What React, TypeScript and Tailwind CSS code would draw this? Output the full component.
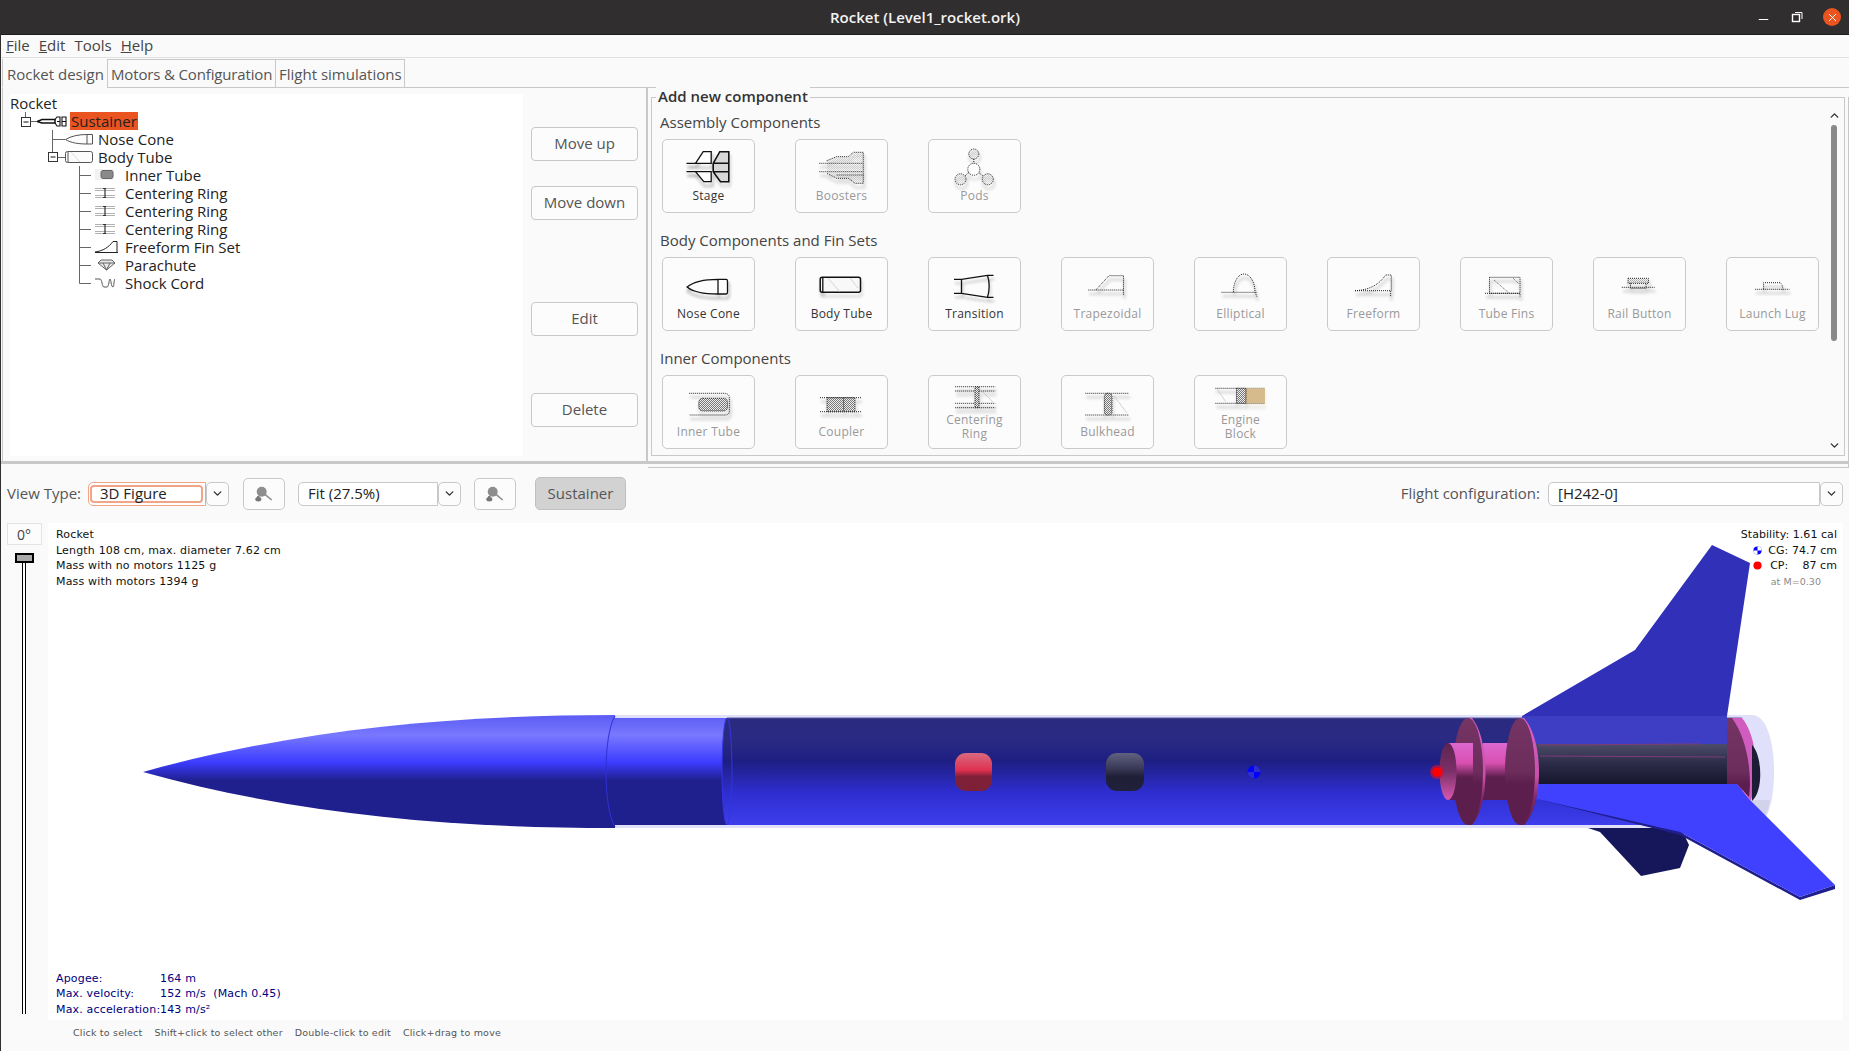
import { ChevronDown, ChevronUp, Minus, X } from "lucide-react";
import type { ReactNode } from "react";

const treeRows = [
  { label: "Rocket", pad: "pl-0" },
  { label: "Sustainer", pad: "pl-[27px]", icon: "sustainer", selected: true },
  { label: "Nose Cone", pad: "pl-[55px]", icon: "nose" },
  { label: "Body Tube", pad: "pl-[55px]", icon: "body" },
  { label: "Inner Tube", pad: "pl-[85px]", icon: "inner" },
  { label: "Centering Ring", pad: "pl-[85px]", icon: "ring" },
  { label: "Centering Ring", pad: "pl-[85px]", icon: "ring" },
  { label: "Centering Ring", pad: "pl-[85px]", icon: "ring" },
  { label: "Freeform Fin Set", pad: "pl-[85px]", icon: "fin" },
  { label: "Parachute", pad: "pl-[85px]", icon: "chute" },
  { label: "Shock Cord", pad: "pl-[85px]", icon: "cord" },
];

function TreeIcon({ name }: { name?: string }) {
  if (name === "sustainer") {
    return (
      <svg width="30" height="18" viewBox="0 0 30 18" className="mr-[3px]" fill="none" stroke="#111">
        <path d="M0 9.5 L5 7.5 H18 V11 H5 Z" fill="#fff" strokeWidth="1.5" />
        <path d="M18 7.5 L20 5 H23 V14 H20 L18 11 M25 5 H29 V14 H25 Z M25 9.5 H29 M20 9.5 H23" strokeWidth="1.1" />
      </svg>
    );
  }
  if (name === "nose") {
    return (
      <svg width="28" height="18" viewBox="0 0 28 18" className="mr-[5px]" fill="none" stroke="#555">
        <path d="M0.5 9.5 C6 6 14 4.5 22 4.5 H27.5 V14 H22 C14 14 6 13 0.5 9.5 Z M22 4.5 V14" fill="#fcfcfc" />
      </svg>
    );
  }
  if (name === "body") {
    return (
      <svg width="28" height="18" viewBox="0 0 28 18" className="mr-[5px]" fill="none" stroke="#555">
        <rect x="0.5" y="3.5" width="27" height="11" rx="2" fill="#fcfcfc" />
        <path d="M3 4 V14" />
        <path d="M6 4 L15 14" stroke="#ddd" />
      </svg>
    );
  }
  return (
    <svg width="24" height="18" viewBox="0 0 24 18" className="mr-[6px]" fill="none" stroke="#555">
      {name === "inner" && (
        <g>
          <rect x="0" y="3" width="19" height="11" fill="#f2f2f2" stroke="none" />
          <rect x="6" y="4.5" width="12" height="8" rx="2" fill="#8a8a8a" stroke="#666" />
        </g>
      )}
      {name === "ring" && (
        <g>
          <path d="M0 4.5 H20 M0 6.5 H20 M0 11.5 H20 M0 13.5 H20" stroke="#aaa" strokeWidth="0.9" />
          <path d="M10 4 V14 M8 4.5 H11 M8 13.5 H11" stroke="#333" strokeWidth="1.2" />
        </g>
      )}
      {name === "fin" && <path d="M0 14.5 H23 M0 14 C8 13 14 9 18 3.5 H22 V14.5" stroke="#222" strokeWidth="1" />}
      {name === "chute" && (
        <path d="M3 7 L6 4 H17 L20 7 L11.5 14 Z M3 7 H20 M8 7 L11.5 14 M15 7 L11.5 14" strokeWidth="0.9" fill="#e8e8e8" />
      )}
      {name === "cord" && <path d="M0 5 H5 C7 5 7 13 9 13 H12 C14 13 14 5 15 5 C16 5 16 13 18 13 C19 13 19 5 20 5" strokeWidth="1" />}
    </svg>
  );
}

function Tree() {
  return (
    <div className="relative ml-[7px] mt-[6px] mb-[5px] w-[513px] h-[362px] bg-white text-[15px] leading-[18px] text-[#222]">
      {/* connector lines of the tree */}
      <svg className="absolute left-0 top-0" width="120" height="200" fill="none" stroke="#666">
        <path d="M15.5 18 V23 M20 27.5 H27 M42.5 36 V58 M42.5 45.5 H55 M48 63.5 H55 M69.5 72 V189.5 M69.5 81.5 H81 M69.5 99.5 H81 M69.5 117.5 H81 M69.5 135.5 H81 M69.5 153.5 H81 M69.5 171.5 H81 M69.5 189.5 H81" />
        <rect x="11.5" y="23.5" width="9" height="9" fill="#fff" stroke="#333" />
        <path d="M13.5 28 H18.5" stroke="#111" />
        <rect x="38.5" y="58.5" width="9" height="9" fill="#fff" stroke="#333" />
        <path d="M40.5 63 H45.5" stroke="#111" />
      </svg>
      {treeRows.map((row, i) => (
        <div key={i} className={`relative flex items-center h-[18px] ${row.pad}`}>
          {row.icon && <TreeIcon name={row.icon} />}
          <span className={row.selected ? "bg-[#e95420] px-[1px]" : ""}>{row.label}</span>
        </div>
      ))}
    </div>
  );
}

function SideButton({ label, className }: { label: string; className: string }) {
  return (
    <button className={`h-[34px] w-[107px] rounded-[4px] border border-[#c8c8c8] bg-[#fcfcfc] pb-[2px] text-[15px] text-[#555] ${className}`}>
      {label}
    </button>
  );
}

// outline drawn twice: once blurred as a drop shadow, once sharp
function CardIcon({ children, off }: { children: ReactNode; off?: boolean }) {
  return (
    <svg width="48" height="36" viewBox="0 0 48 36" fill="none" className="mb-[3px] shrink-0 overflow-visible">
      <defs>
        <filter id="soft" x="-20%" y="-20%" width="140%" height="160%">
          <feGaussianBlur stdDeviation="1.8" />
        </filter>
        <pattern id="dither" width="2" height="2" patternUnits="userSpaceOnUse">
          <rect width="2" height="2" fill="#eee" />
          <rect width="1" height="1" fill="#777" />
          <rect x="1" y="1" width="1" height="1" fill="#777" />
        </pattern>
      </defs>
      <g transform="translate(1 4)" stroke="#000" strokeWidth="2.5" opacity={off ? 0.14 : 0.3} filter="url(#soft)">
        {children}
      </g>
      <g stroke={off ? "#222" : "#111"} strokeWidth={off ? 1 : 1.3} strokeDasharray={off ? "1 1" : undefined}>
        {children}
      </g>
    </svg>
  );
}

const icons: Record<string, ReactNode> = {
  Stage: (
    <g>
      <path d="M1.5 13.3 H10.5 M1.5 21.7 H10.5" />
      <path d="M10.5 13.3 L18.2 1.7 H26.2 V13.3 Z M10.5 21.7 H26.2 V31.7 H18.8 Z" fill="#fff" />
      <path d="M28.2 13.3 L34.8 1.7 H43.8 V31.7 H35.5 L28.2 21.7 Z M28.2 13.3 H43.8 M28.2 21.7 H43.8" fill="#d8d8d8" strokeWidth="1.6" />
    </g>
  ),
  Boosters: (
    <path
      d="M8.7 10.7 L18.7 6.7 H30.3 L35.3 2.3 H45.3 V33.3 H37 L30.3 28.3 H18.7 L8.7 23.3 M1.3 13.3 H45.3 M1.3 21.7 H45.3 M18.7 25 H45.3"
      fill="url(#dither)"
      fillOpacity="0.25"
    />
  ),
  Pods: (
    <g>
      <circle cx="22.8" cy="4" r="5" fill="url(#dither)" fillOpacity="0.25" />
      <circle cx="22.8" cy="19.3" r="6" fill="#fff" />
      <circle cx="9.5" cy="29.3" r="5.5" fill="url(#dither)" fillOpacity="0.25" />
      <circle cx="36.8" cy="29.3" r="5.5" fill="url(#dither)" fillOpacity="0.25" />
      <path d="M22.8 9 V13.3 M17.8 22.5 L14 26 M27.8 22.5 L32 26" />
    </g>
  ),
  "Nose Cone": <path d="M2.1 19 C8 14 20 11.3 33 11.3 H41 Q42.5 11.3 42.5 13 V24 Q42.5 26 41 26 H33 C20 26 8 24 2.1 19 Z M33 11.3 V26" fill="#fcfcfc" />,
  "Body Tube": (
    <g>
      <rect x="2.2" y="9.3" width="40.3" height="15" rx="2" fill="#f8f8f8" strokeWidth="1.5" />
      <path d="M4.8 9.3 V24.3" />
      <path d="M10 10 L22 24 M32 10 L40 20" stroke="#bbb" strokeWidth="0.6" />
    </g>
  ),
  Transition: <path d="M3 11.3 H10.5 L36.5 7.3 H42.5 M3 25.3 H10.5 L36.5 29.3 H42.5 M10.5 11.3 V25.3 M36.5 7.3 C38.5 14 38.5 23 36.5 29.3" fill="#fff" strokeWidth="1.3" />,
  Trapezoidal: <path d="M4.3 22 H39.5 M11.8 22 L24.9 7.7 H39.5 V27" />,
  Elliptical: <path d="M4.5 24.3 H40 M16.4 24.3 C16.4 14 21 6 27 6 C33 6 38 14 38 24.3 L40 28.7" />,
  Freeform: <path d="M5 22.7 H40.6 V28.7 M5 22.7 C18 22 28 18 35.6 7 H41.3 V22.7" />,
  "Tube Fins": (
    <g>
      <rect x="6.5" y="9.3" width="30.5" height="16" />
      <path d="M2 25.3 H37 V28.7" />
      <path d="M11 12 L26 25 M30 10 L36 16" strokeWidth="0.7" />
    </g>
  ),
  "Rail Button": (
    <g>
      <rect x="12" y="10.3" width="20.5" height="5" fill="url(#dither)" fillOpacity="0.5" />
      <path d="M5.8 19.3 H38.6 M14.5 15.3 V20.3 H30 V15.3" />
    </g>
  ),
  "Launch Lug": <path d="M6.2 21.3 H40.6 M14.6 21.3 V14.7 H31 Q33.7 16 33.7 21.3" />,
  "Inner Tube": (
    <g>
      <path d="M4.2 7.3 H40 Q44.4 8 44.4 12 V25 Q44.4 29 40 29 H4.2" />
      <rect x="13.8" y="12.3" width="28.7" height="12.7" rx="4" fill="url(#dither)" />
    </g>
  ),
  Coupler: (
    <g>
      <path d="M2 11.7 H43 M2 25.7 H43" />
      <rect x="9" y="11.7" width="28" height="14" fill="url(#dither)" />
      <path d="M25.7 11.7 V25.7" />
    </g>
  ),
  "Centering Ring": (
    <g>
      <path d="M4.2 12.7 H44.4 M4.2 17 H44.4 M4.2 29.3 H44.4 M4.2 33.7 H44.4" />
      <rect x="24" y="12.7" width="4" height="21" fill="url(#dither)" />
      <path d="M30 16 L42 28" stroke="#aaa" strokeDasharray="none" strokeWidth="0.5" />
    </g>
  ),
  Bulkhead: (
    <g>
      <path d="M1.3 7.3 H45.3 M1.3 29 H45.3" />
      <rect x="20.4" y="7.3" width="7.6" height="21.7" rx="3" fill="url(#dither)" />
      <path d="M30 10 L43 27" stroke="#aaa" strokeDasharray="none" strokeWidth="0.5" />
    </g>
  ),
  "Engine Block": (
    <g>
      <path d="M-1.6 14.3 H48 M-1.6 29.3 H48" />
      <path d="M0 15 L9 28" stroke="#aaa" strokeDasharray="none" strokeWidth="0.5" />
      <rect x="29" y="14.3" width="19" height="15" fill="#d6bc8c" stroke="none" />
      <rect x="19.5" y="14.3" width="9.5" height="15" fill="url(#dither)" />
    </g>
  ),
};

const sections = [
  {
    title: "Assembly Components",
    cards: [
      { label: ["Stage"] },
      { label: ["Boosters"], off: true },
      { label: ["Pods"], off: true },
    ],
  },
  {
    title: "Body Components and Fin Sets",
    cards: [
      { label: ["Nose Cone"] },
      { label: ["Body Tube"] },
      { label: ["Transition"] },
      { label: ["Trapezoidal"], off: true },
      { label: ["Elliptical"], off: true },
      { label: ["Freeform"], off: true },
      { label: ["Tube Fins"], off: true },
      { label: ["Rail Button"], off: true },
      { label: ["Launch Lug"], off: true },
    ],
  },
  {
    title: "Inner Components",
    cards: [
      { label: ["Inner Tube"], off: true },
      { label: ["Coupler"], off: true },
      { label: ["Centering", "Ring"], off: true },
      { label: ["Bulkhead"], off: true },
      { label: ["Engine", "Block"], off: true },
    ],
  },
];

function ComponentCard({ label, off }: { label: string[]; off?: boolean }) {
  const two = label.length > 1;
  return (
    <div
      className={`flex h-[74px] w-[93px] flex-col items-center justify-end rounded-[5px] border border-[#cacaca] bg-[#fcfcfc] text-center text-[12px] leading-[14px] tracking-[0.25px] ${
        two ? "pb-[7px]" : "pb-[9px]"
      } ${off ? "text-[#999]" : "text-[#333]"}`}
    >
      <CardIcon off={off}>{icons[label.join(" ")]}</CardIcon>
      {label.map((l) => (
        <span key={l}>{l}</span>
      ))}
    </div>
  );
}

function AddComponentPanel() {
  return (
    <div className="relative ml-[3px] mt-[9px] flex h-[359px] w-[1194px] border border-[#c8c8c8]">
      <span className="absolute left-[4px] top-[-12px] bg-[#fafafa] px-[2px] text-[15px] leading-[20px] font-semibold text-[#333]">
        Add new component
      </span>
      <div className="flex-1 pl-[8px] pt-[15px]">
        {sections.map((s) => (
          <div key={s.title} className="mb-[18px]">
            <div className="mb-[6px] h-[20px] text-[15px] leading-[18px] text-[#444]">{s.title}</div>
            <div className="ml-[2px] flex gap-x-[40px]">
              {s.cards.map((c) => (
                <ComponentCard key={c.label.join(" ")} label={c.label} off={c.off} />
              ))}
            </div>
          </div>
        ))}
      </div>
      <div className="mr-[2px] flex w-[16px] flex-col items-center pt-[11px]">
        <ChevronUp size={13} strokeWidth={2.6} className="text-[#333]" />
        <div className="mt-[3px] h-[216px] w-[6px] rounded-[3px] bg-[#888]" />
        <ChevronDown size={13} strokeWidth={2.6} className="mt-auto mb-[3px] text-[#333]" />
      </div>
    </div>
  );
}

function ZoomIcon() {
  return (
    <svg width="18" height="20" viewBox="0 0 18 20" fill="#8e8e8e">
      <path d="M10 10.3 L16.7 16" stroke="#8e8e8e" strokeWidth="1.6" />
      <path d="M3.3 12 V15" stroke="#777" strokeWidth="2.4" />
      <ellipse cx="3.3" cy="15.3" rx="3" ry="2.2" fill="#777" />
      <circle cx="6.7" cy="7.7" r="5" />
    </svg>
  );
}

function Combo({ text, box, focus }: { text: string; box: string; focus?: boolean }) {
  return (
    <div className="flex items-center">
      <div
        className={`flex h-[24px] items-center rounded-l-[5px] bg-white text-[15px] text-[#222] ${box} ${
          focus ? "border border-[#f0a488] pl-[1px] pr-[2px]" : "border border-[#c8c8c8] pl-[9px]"
        }`}
      >
        {focus ? (
          <span className="flex h-[18px] w-full items-center rounded-[4px] border-2 border-[#f0a488] pl-[8px]">{text}</span>
        ) : (
          text
        )}
      </div>
      <div className="flex h-[24px] w-[23px] items-center justify-center rounded-[5px] border border-[#c8c8c8] bg-[#fcfcfc]">
        <ChevronDown size={13} strokeWidth={2.6} className="text-[#333]" />
      </div>
    </div>
  );
}

function IconButton() {
  return (
    <div className="flex h-[32px] w-[42px] items-center justify-center rounded-[5px] border border-[#c8c8c8] bg-[#fcfcfc]">
      <ZoomIcon />
    </div>
  );
}

function Toolbar() {
  return (
    <div className="flex h-[59px] shrink-0 items-center pl-[6px] pr-[6px] text-[15px] text-[#555]">
      <span className="w-[81px]">View Type:</span>
      <Combo text="3D Figure" box="w-[118px]" focus />
      <div className="ml-[14px]">
        <IconButton />
      </div>
      <div className="ml-[13px]">
        <Combo text="Fit (27.5%)" box="w-[140px]" />
      </div>
      <div className="ml-[13px]">
        <IconButton />
      </div>
      <div className="ml-[19px] flex h-[33px] w-[91px] items-center justify-center rounded-[5px] border border-[#c0c0c0] bg-[#d2d2d2] text-[#555]">
        Sustainer
      </div>
      <span className="ml-auto mr-[8px]">Flight configuration:</span>
      <Combo text="[H242-0]" box="w-[272px]" />
    </div>
  );
}

// the 3D view, drawn in page coordinates
function RocketDrawing() {
  return (
    <svg className="absolute inset-0" width="1795" height="497" viewBox="48 523 1795 497">
      <defs>
        <linearGradient id="noseFill" gradientUnits="userSpaceOnUse" x1="0" y1="715" x2="0" y2="828">
          <stop offset="0" stopColor="#5c5cf4" />
          <stop offset="0.18" stopColor="#7878ff" />
          <stop offset="0.42" stopColor="#3c3cff" />
          <stop offset="0.58" stopColor="#1f1f8e" />
          <stop offset="1" stopColor="#1f1f8e" />
        </linearGradient>
        <linearGradient id="tubeFill" gradientUnits="userSpaceOnUse" x1="0" y1="718" x2="0" y2="825">
          <stop offset="0" stopColor="#2a2a80" />
          <stop offset="0.2" stopColor="#2a2a84" />
          <stop offset="0.4" stopColor="#1e1e82" />
          <stop offset="0.7" stopColor="#2e2ed0" />
          <stop offset="1" stopColor="#3e3eec" />
        </linearGradient>
        <linearGradient id="redFill" gradientUnits="userSpaceOnUse" x1="0" y1="753" x2="0" y2="791">
          <stop offset="0" stopColor="#d86a80" />
          <stop offset="0.45" stopColor="#e03050" />
          <stop offset="0.62" stopColor="#802038" />
          <stop offset="1" stopColor="#7c2038" />
        </linearGradient>
        <linearGradient id="darkFill" gradientUnits="userSpaceOnUse" x1="0" y1="753" x2="0" y2="791">
          <stop offset="0" stopColor="#606080" />
          <stop offset="0.4" stopColor="#3a3a58" />
          <stop offset="0.62" stopColor="#1f1f38" />
          <stop offset="1" stopColor="#20203a" />
        </linearGradient>
        <linearGradient id="pinkFill" gradientUnits="userSpaceOnUse" x1="0" y1="743" x2="0" y2="800">
          <stop offset="0" stopColor="#dc68d0" />
          <stop offset="0.35" stopColor="#d850b0" />
          <stop offset="0.6" stopColor="#5c1e4c" />
          <stop offset="1" stopColor="#5c1e4c" />
        </linearGradient>
        <linearGradient id="ringFace" gradientUnits="userSpaceOnUse" x1="0" y1="718" x2="0" y2="825">
          <stop offset="0" stopColor="#743464" />
          <stop offset="0.5" stopColor="#6c2c5c" />
          <stop offset="0.62" stopColor="#5c1e4c" />
          <stop offset="1" stopColor="#5c1e4c" />
        </linearGradient>
        <linearGradient id="rimFill" gradientUnits="userSpaceOnUse" x1="0" y1="718" x2="0" y2="825">
          <stop offset="0" stopColor="#d860c8" />
          <stop offset="0.55" stopColor="#c850a8" />
          <stop offset="0.75" stopColor="#7c2868" />
          <stop offset="1" stopColor="#5c1e4c" />
        </linearGradient>
        <linearGradient id="holeFill" gradientUnits="userSpaceOnUse" x1="0" y1="743" x2="0" y2="800">
          <stop offset="0" stopColor="#5c2450" />
          <stop offset="0.5" stopColor="#7c3068" />
          <stop offset="1" stopColor="#d858b0" />
        </linearGradient>
        <linearGradient id="innerFill" gradientUnits="userSpaceOnUse" x1="0" y1="743" x2="0" y2="784">
          <stop offset="0" stopColor="#4e4e6c" />
          <stop offset="0.5" stopColor="#2c2c48" />
          <stop offset="1" stopColor="#16162e" />
        </linearGradient>
      </defs>

      {/* far fin behind the tube */}
      <path d="M1582 826 L1600 832 L1641 876 L1680 868 L1689 845 L1680 826 Z" fill="#16165a" />

      {/* clear outer tube */}
      <path d="M610 715 H1752 C1766 715 1774 740 1774 772 C1774 804 1766 828 1752 828 H610 Z" fill="#e0e0fa" />
      <path d="M1750 800 L1770 800 C1768 814 1760 828 1752 828 L1700 828 Z" fill="#d2d2ea" />

      {/* tube inside */}
      <path d="M722 718 H1742 V825 H722 Z" fill="url(#tubeFill)" />
      <path d="M727 718 H1742" stroke="#5a5a98" strokeWidth="1" />
      <rect x="610" y="718" width="117" height="107" fill="url(#noseFill)" />
      <ellipse cx="727" cy="771.5" rx="5" ry="53.5" fill="url(#tubeFill)" stroke="#3434e0" strokeWidth="1" />

      {/* nose cone */}
      <path d="M143 772 C300 728 460 715 615 715 V828 C460 828 300 816 143 772 Z" fill="url(#noseFill)" />
      <path d="M615 716 C603 735 603 808 615 827" fill="none" stroke="#3030d8" strokeWidth="1" />

      {/* motor and parachute capsules */}
      <rect x="955" y="753" width="37" height="38" rx="11" fill="url(#redFill)" />
      <rect x="1106" y="753" width="38" height="38" rx="11" fill="url(#darkFill)" />

      {/* top fin */}
      <path d="M1522 716 L1635 650 L1712 545 L1750 563 L1727 716 Z" fill="#3030b8" />
      <rect x="1522" y="716" width="205" height="30" fill="#3e3ec4" />
      <rect x="1490" y="746" width="237" height="40" fill="url(#tubeFill)" />

      {/* inner tube */}
      <rect x="1530" y="744" width="208" height="40" fill="url(#innerFill)" />
      <path d="M1538 745 L1700 744 M1540 756 L1725 757" stroke="#7c3c78" strokeWidth="1" fill="none" />

      {/* lower blue band and near fin */}
      <rect x="1530" y="784" width="208" height="16" fill="#3c3ce8" />
      <path d="M1537 799 L1680 835 L1800 900 L1835 889 V885 L1800 897 L1680 832 L1537 796 Z" fill="#1e1e8c" />
      <path d="M1537 799 V784 H1737 L1750 800 L1835 885 L1800 897 L1680 832 Z" fill="#4040ff" />

      {/* rear centering ring */}
      <path d="M1727 718 H1742 C1752 730 1762 760 1751 801 L1737 784 H1727 Z" fill="#d05cc0" />
      <path d="M1727 718 H1732 C1748 740 1752 775 1749 797 L1737 784 H1727 Z" fill="url(#ringFace)" />
      <path d="M1752 745 C1762 755 1764 790 1752 801 Z" fill="#1c1c34" />

      {/* forward rings and coupling */}
      <rect x="1483" y="743" width="46" height="57" fill="url(#pinkFill)" />
      <path d="M1468 718 H1472 C1490 740 1490 805 1472 825 H1468 Z" fill="url(#rimFill)" />
      <ellipse cx="1468" cy="771.5" rx="15" ry="53.5" fill="url(#ringFace)" />
      <path d="M1520 718 H1524 C1544 740 1544 805 1524 825 H1520 Z" fill="url(#rimFill)" />
      <ellipse cx="1520" cy="771.5" rx="15" ry="53.5" fill="url(#ringFace)" />
      <rect x="1448" y="743" width="25" height="57" fill="url(#pinkFill)" />
      <ellipse cx="1448" cy="771.5" rx="8.5" ry="28.5" fill="url(#holeFill)" />

      {/* CG and CP marks */}
      <circle cx="1254" cy="772" r="6.5" fill="#0000ff" />
      <path d="M1254 772 V765.5 A6.5 6.5 0 0 1 1260.5 772 Z M1254 772 V778.5 A6.5 6.5 0 0 1 1247.5 772 Z" fill="#2e2ec8" />
      <circle cx="1437" cy="772" r="7" fill="#d01030" fillOpacity="0.7" />
      <circle cx="1437" cy="772" r="4.6" fill="#ff0000" />
    </svg>
  );
}

function RocketView() {
  const mono = "font-['DejaVu_Sans',sans-serif] text-[11px] leading-[15.5px]";
  return (
    <div className="relative mr-[6px] flex-1 bg-white">
      <RocketDrawing />
      <div className={`absolute left-[8px] top-[4px] tracking-[0.17px] text-[#111] ${mono}`}>
        <div>Rocket</div>
        <div>Length 108 cm, max. diameter 7.62 cm</div>
        <div>Mass with no motors 1125 g</div>
        <div>Mass with motors 1394 g</div>
      </div>
      <div className={`absolute right-[6px] top-[4px] text-right tracking-[0.05px] text-[#111] ${mono}`}>
        <div>Stability: 1.61 cal</div>
        <div className="flex items-center justify-end gap-[6px]">
          <svg width="9" height="9" viewBox="0 0 11 11">
            <circle cx="5.5" cy="5.5" r="5" fill="#0000ff" />
            <path d="M5.5 5.5 V0.5 A5 5 0 0 1 10.5 5.5 Z M5.5 5.5 V10.5 A5 5 0 0 1 0.5 5.5 Z" fill="#fff" />
          </svg>
          <span>CG: 74.7 cm</span>
        </div>
        <div className="flex items-center justify-end gap-[8px]">
          <svg width="9" height="9" viewBox="0 0 11 11">
            <circle cx="5.5" cy="5.5" r="5" fill="#ff0000" />
          </svg>
          <span className="whitespace-pre">CP:    87 cm</span>
        </div>
        <div className="pr-[16px] text-[9.5px] text-[#8a8a8a]">at M=0.30</div>
      </div>
      <div className={`absolute bottom-[3px] left-[8px] grid grid-cols-[104px_auto] tracking-[0.17px] text-[#000080] ${mono}`}>
        <span>Apogee:</span>
        <span>164 m</span>
        <span>Max. velocity:</span>
        <span className="whitespace-pre">152 m/s  (Mach 0.45)</span>
        <span className="whitespace-nowrap">Max. acceleration:</span>
        <span>143 m/s²</span>
      </div>
    </div>
  );
}

function RotationSlider() {
  return (
    <div className="flex w-[47px] shrink-0 flex-col items-center pr-[7px] pl-[6px]">
      <div className="flex h-[22px] w-[35px] items-center justify-center border border-[#e4e4e4] bg-[#fcfcfc] text-[14px] text-[#444]">
        0°
      </div>
      <div className="mt-[8px] h-[10px] w-[19px] border-2 border-black bg-[#aaa]" />
      <div className="h-[451px] w-[4px] border-x border-black bg-white" />
    </div>
  );
}

export default function App() {
  return (
    <div className="flex h-[1051px] w-[1849px] flex-col overflow-hidden border-l border-[#302e2e] bg-[#fafafa] font-['Open_Sans',sans-serif] text-[#333]">
      {/* title bar */}
      <div className="relative flex h-[35px] shrink-0 items-center justify-center border-b border-[#1e1c1c] bg-[#302e2e] text-[15px] font-semibold text-[#f2f2f2]">
        Rocket (Level1_rocket.ork)
        <div className="absolute right-[8px] top-[7px] flex items-center gap-[19px] text-white">
          <Minus size={15} strokeWidth={1.6} className="mt-[5px]" />
          <svg width="14" height="14" viewBox="0 0 14 14" fill="none" stroke="#fff" strokeWidth="1.4">
            <rect x="2.5" y="4.5" width="7" height="7" />
            <path d="M5 2.5 H12 V9" strokeWidth="1" />
          </svg>
          <div className="flex h-[18px] w-[18px] items-center justify-center rounded-full bg-[#e95420]">
            <X size={13} strokeWidth={1.8} />
          </div>
        </div>
      </div>

      {/* menu */}
      <div className="flex h-[23px] shrink-0 items-center gap-[9px] border-b border-[#e0e0e0] pb-[2px] pl-[5px] text-[15px] text-[#444]">
        <span><u>F</u>ile</span>
        <span><u>E</u>dit</span>
        <span>Tools</span>
        <span><u>H</u>elp</span>
      </div>

      {/* tabs */}
      <div className="ml-[1px] flex h-[30px] shrink-0 items-end whitespace-nowrap text-[15px] text-[#555]">
        <div className="flex h-[29px] w-[105px] items-center border-b border-l border-b-[#fafafa] border-l-[#c8c8c8] pl-[4px] pt-[2px]">Rocket design</div>
        <div className="flex h-[29px] w-[169px] items-center border border-[#c8c8c8] pl-[3px] pt-[2px] tracking-[-0.15px]">Motors &amp; Configuration</div>
        <div className="flex h-[29px] w-[129px] items-center border border-l-0 border-[#c8c8c8] pl-[3px] pt-[2px]">Flight simulations</div>
        <div className="flex-1 border-b border-[#c8c8c8]" />
      </div>

      {/* design panels */}
      <div className="flex h-[373px] shrink-0">
        <div className="ml-[1px] flex w-[646px] shrink-0 border-r-2 border-l border-[#c8c8c8]">
          <Tree />
          <div className="ml-[8px] flex flex-col">
            <SideButton label="Move up" className="mt-[39px]" />
            <SideButton label="Move down" className="mt-[25px]" />
            <SideButton label="Edit" className="mt-[82px]" />
            <SideButton label="Delete" className="mt-[57px]" />
          </div>
        </div>
        <div className="flex-1 pb-[2px]">
          <div className="h-full border-r border-b border-[#c8c8c8]">
            <AddComponentPanel />
          </div>
        </div>
      </div>
      <div className="h-[3px] shrink-0 bg-[#c8c8c8]" />

      <Toolbar />

      {/* rocket view */}
      <div className="flex h-[497px] shrink-0">
        <RotationSlider />
        <RocketView />
      </div>

      {/* mouse hints */}
      <div className="flex h-[31px] shrink-0 items-center gap-[12px] pb-[5px] pl-[72px] font-['DejaVu_Sans',sans-serif] text-[9.5px] tracking-[0.2px] text-[#555]">
        <span>Click to select</span>
        <span>Shift+click to select other</span>
        <span>Double-click to edit</span>
        <span>Click+drag to move</span>
      </div>
    </div>
  );
}
